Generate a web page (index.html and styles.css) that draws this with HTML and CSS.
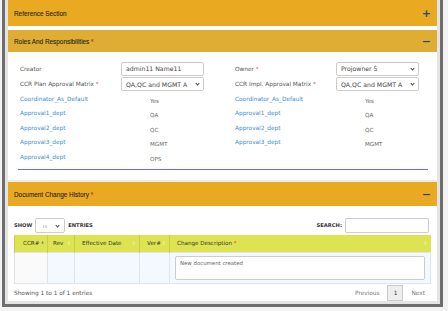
FILE: index.html
```html
<!DOCTYPE html>
<html lang="en">
  <head>
    <meta charset="UTF-8" />
    <title>CCR</title>
    <link rel="stylesheet" href="styles.css">
  </head>
  <body>
    <div class="frame">
      <div class="modal">
        <div class="panel-heading ref">
          <span>Reference Section</span>
          <span class="toggle">+</span>
        </div>

        <div class="panel-heading roles">
          <span>Roles And Responsibilities <i class="req">*</i></span>
          <span class="toggle">&minus;</span>
        </div>

        <div class="roles-body">
          <div class="col">
            <div class="row"><span class="label">Creator</span><input class="field" value="admin11 Name11"></div>
            <div class="row"><span class="label">CCR Plan Approval Matrix <i class="req">*</i></span><div class="field select">QA,QC and MGMT A<span class="caret"></span></div></div>
            <div class="row"><span class="link">Coordinator_As_Default</span><span class="value">Yes</span></div>
            <div class="row"><span class="link">Approval1_dept</span><span class="value">QA</span></div>
            <div class="row"><span class="link">Approval2_dept</span><span class="value">QC</span></div>
            <div class="row"><span class="link">Approval3_dept</span><span class="value">MGMT</span></div>
            <div class="row"><span class="link">Approval4_dept</span><span class="value">OPS</span></div>
          </div>
          <div class="col">
            <div class="row"><span class="label">Owner <i class="req">*</i></span><div class="field select">Projowner 5<span class="caret"></span></div></div>
            <div class="row"><span class="label">CCR Impl. Approval Matrix <i class="req">*</i></span><div class="field select">QA,QC and MGMT A<span class="caret"></span></div></div>
            <div class="row"><span class="link">Coordinator_As_Default</span><span class="value">Yes</span></div>
            <div class="row"><span class="link">Approval1_dept</span><span class="value">QA</span></div>
            <div class="row"><span class="link">Approval2_dept</span><span class="value">QC</span></div>
            <div class="row"><span class="link">Approval3_dept</span><span class="value">MGMT</span></div>
          </div>
        </div>
        <div class="divider"></div>
        <div class="gap"></div>

        <div class="panel-heading history">
          <span>Document Change History <i class="req">*</i></span>
          <span class="toggle">&minus;</span>
        </div>

        <div class="history-body">
          <div class="controls">
            <div class="show">
              SHOW
              <div class="small-select">10<span class="caret"></span></div>
              ENTRIES
            </div>
            <div class="search">SEARCH: <input class="search-input"></div>
          </div>

          <table class="grid">
            <thead>
              <tr>
                <th class="c1">CCR# <span class="up">&#9650;</span></th>
                <th class="c2">Rev <span class="sort">&#8661;</span></th>
                <th class="c3">Effective Date <span class="sort">&#8661;</span></th>
                <th class="c4">Ver# <span class="sort">&#8661;</span></th>
                <th class="c5">Change Description <i class="req">*</i> <span class="sort">&#8661;</span></th>
              </tr>
            </thead>
            <tbody>
              <tr>
                <td class="first"></td>
                <td></td>
                <td></td>
                <td></td>
                <td><div class="desc">New document created</div></td>
              </tr>
            </tbody>
          </table>

          <div class="footer">
            <span>Showing 1 to 1 of 1 entries</span>
            <div class="pager">
              <span>Previous</span>
              <span class="page">1</span>
              <span>Next</span>
            </div>
          </div>
        </div>
      </div>
    </div>
  </body>
</html>
```

FILE: styles.css
```css
* {
    margin: 0;
    padding: 0;
    box-sizing: border-box;
}

body {
    background-color: #f2f2f2;
    font-family: 'DejaVu Sans', Verdana, sans-serif;
    color: #555;
}

.frame {
    width: 441px;
    height: 307px;
    margin-left: 2px;
    border: 3px solid #6e6e6e;
    border-top: none;
    padding: 0 3px 3px 3px;
    background-color: #e4e4e4;
}

.modal {
    height: 100%;
    background-color: #fff;
    overflow: hidden;
}

.req {
    font-style: normal;
    color: #e33;
}

.panel-heading {
    display: flex;
    justify-content: space-between;
    align-items: center;
    padding: 0 6px 0 6px;
    font-family: 'Liberation Sans', Arial, sans-serif;
    font-size: 6.4px;
    color: #222;
    -webkit-text-stroke: 0.08px #222;
    background-color: #e9aa22;
}

.panel-heading.ref {
    height: 26px;
}

.panel-heading.roles {
    height: 22px;
    margin-top: 4px;
    background-color: #dfad33;
}

.panel-heading.history {
    height: 24px;
}

.toggle {
    font-family: 'DejaVu Sans', sans-serif;
    font-size: 11px;
    font-weight: bold;
    color: #1d4e7a;
    -webkit-text-stroke: 0;
}

.roles-body {
    display: flex;
    padding: 9px 0 0 12px;
}

.col {
    width: 215px;
    flex-shrink: 0;
    display: flex;
    flex-direction: column;
}

.row {
    display: flex;
    align-items: center;
    height: 14.5px;
}

.row:first-child {
    height: 15px;
    margin-bottom: 1px;
}

.label,
.link {
    width: 101px;
    flex-shrink: 0;
    font-size: 5.8px;
}

.label {
    color: #555;
}

.link {
    color: #3d8ed3;
}

.value {
    padding: 4px 0 0 29px;
    font-size: 5.6px;
    color: #666;
}

.field {
    width: 83px;
    height: 14px;
    border: 1px solid #ccc;
    border-radius: 2px;
    padding: 0 4px;
    font-family: 'DejaVu Sans', sans-serif;
    font-size: 6.2px;
    color: #444;
    background-color: #fff;
}

.select {
    position: relative;
    display: flex;
    align-items: center;
}

.caret {
    position: absolute;
    right: 4px;
    top: 4px;
    width: 3px;
    height: 3px;
    border-right: 1px solid #444;
    border-bottom: 1px solid #444;
    transform: rotate(45deg);
}

.divider {
    margin: 5px 9px 0 10px;
    border-top: 1px solid #6b6bf0;
}

.gap {
    height: 12px;
    border-bottom: 2px solid #eeeeee;
}

.history-body {
    padding: 11px 6px 0 6px;
}

.controls {
    display: flex;
    justify-content: space-between;
    align-items: center;
    height: 16px;
    font-family: 'DejaVu Sans', sans-serif;
    font-size: 5.2px;
    font-weight: bold;
    color: #333;
}

.show,
.search {
    display: flex;
    align-items: center;
    gap: 3px;
}

.small-select {
    position: relative;
    width: 30px;
    height: 15px;
    border: 1px solid #ccc;
    border-radius: 2px;
    padding: 5px 0 0 6px;
    font-family: 'Liberation Serif', serif;
    font-weight: normal;
    font-size: 5px;
    color: #999;
}

.small-select .caret {
    top: 5px;
    right: 5px;
}

.search-input {
    width: 84px;
    height: 15px;
    margin-right: 2px;
    border: 1px solid #ccc;
    border-radius: 2px;
}

.grid {
    width: 417px;
    margin-top: 2px;
    border-collapse: collapse;
    table-layout: fixed;
    font-size: 5.6px;
}

.grid th {
    height: 17px;
    padding: 0 3px 0 7px;
    text-align: left;
    white-space: nowrap;
    font-weight: normal;
    color: #333;
    background-color: #dee352;
    border-left: 1px solid #c8cc50;
}

.grid th.c1 { width: 33px; padding-left: 8px; }
.grid th.c2 { width: 27px; padding-left: 5px; }
.grid th.c3 { width: 65px; }
.grid th.c4 { width: 30px; }

.sort {
    float: right;
    color: #f2f2c8;
    font-size: 5px;
}

.up {
    color: #4a6fd0;
    font-size: 3px;
    vertical-align: 2px;
}

.grid td {
    height: 31px;
    padding: 0 5px;
    border: 1px solid #dde4ea;
    background-color: #f3f9fe;
}

.grid td.first {
    background-color: #fafafa;
}

.desc {
    height: 24px;
    border: 1px solid #ccc;
    border-radius: 2px;
    padding: 3px 4px;
    font-size: 5.4px;
    color: #666;
    background-color: #fff;
}

.footer {
    display: flex;
    justify-content: space-between;
    align-items: center;
    margin-top: 1px;
    font-size: 5.8px;
    color: #555;
}

.pager {
    display: flex;
    align-items: center;
    gap: 8px;
    padding-right: 6px;
    color: #777;
}

.page {
    width: 16px;
    height: 16px;
    display: flex;
    align-items: center;
    justify-content: center;
    border: 1px solid #ccc;
    background-color: #eee;
    color: #333;
}
```
